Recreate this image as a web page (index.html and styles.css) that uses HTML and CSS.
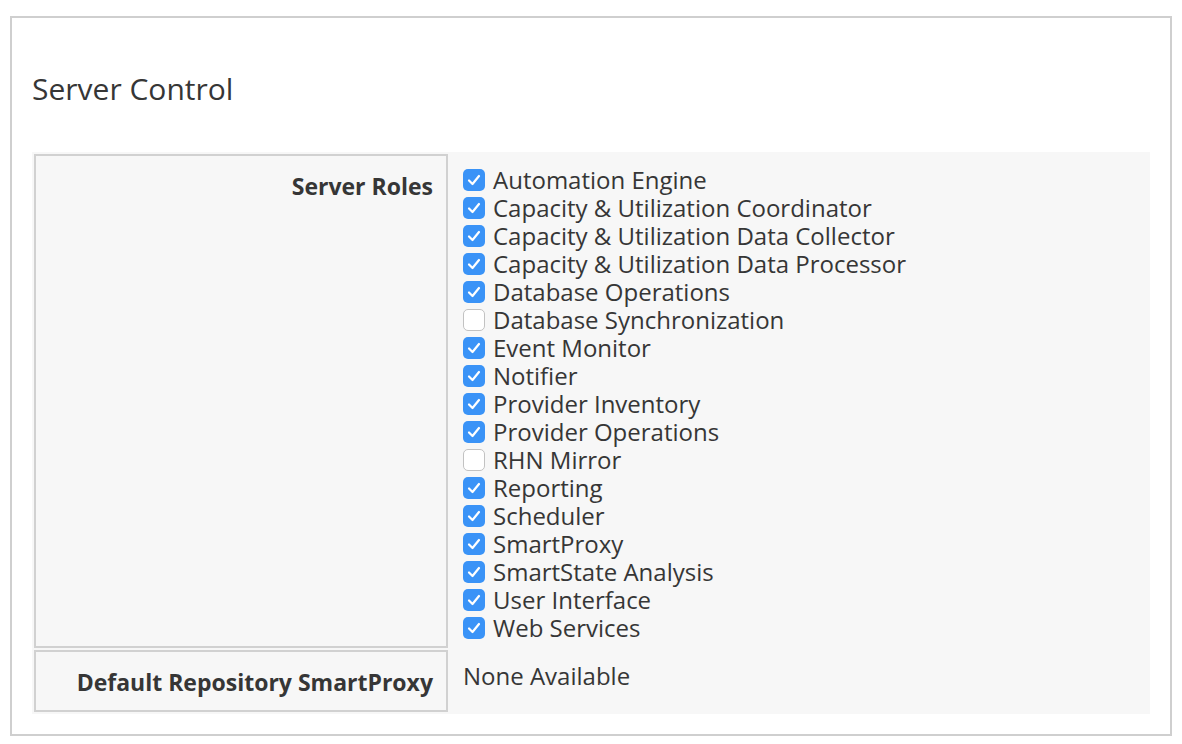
FILE: index.html
```html
<!DOCTYPE html>
<html>
<head>
<meta charset="utf-8">
<link rel="stylesheet" href="styles.css">
</head>
<body>
<div class="panel">
  <h1 class="title">Server Control</h1>
  <table class="form-table">
    <tr>
      <th class="label">Server Roles</th>
      <td class="value">
        <ul class="roles">
          <li><span class="cb on"><svg viewBox="0 0 22 22"><path d="M6 11.5l3.5 3.5 6.5-8" /></svg></span>Automation Engine</li>
          <li><span class="cb on"><svg viewBox="0 0 22 22"><path d="M6 11.5l3.5 3.5 6.5-8" /></svg></span>Capacity &amp; Utilization Coordinator</li>
          <li><span class="cb on"><svg viewBox="0 0 22 22"><path d="M6 11.5l3.5 3.5 6.5-8" /></svg></span>Capacity &amp; Utilization Data Collector</li>
          <li><span class="cb on"><svg viewBox="0 0 22 22"><path d="M6 11.5l3.5 3.5 6.5-8" /></svg></span>Capacity &amp; Utilization Data Processor</li>
          <li><span class="cb on"><svg viewBox="0 0 22 22"><path d="M6 11.5l3.5 3.5 6.5-8" /></svg></span>Database Operations</li>
          <li><span class="cb off"></span>Database Synchronization</li>
          <li><span class="cb on"><svg viewBox="0 0 22 22"><path d="M6 11.5l3.5 3.5 6.5-8" /></svg></span>Event Monitor</li>
          <li><span class="cb on"><svg viewBox="0 0 22 22"><path d="M6 11.5l3.5 3.5 6.5-8" /></svg></span>Notifier</li>
          <li><span class="cb on"><svg viewBox="0 0 22 22"><path d="M6 11.5l3.5 3.5 6.5-8" /></svg></span>Provider Inventory</li>
          <li><span class="cb on"><svg viewBox="0 0 22 22"><path d="M6 11.5l3.5 3.5 6.5-8" /></svg></span>Provider Operations</li>
          <li><span class="cb off"></span>RHN Mirror</li>
          <li><span class="cb on"><svg viewBox="0 0 22 22"><path d="M6 11.5l3.5 3.5 6.5-8" /></svg></span>Reporting</li>
          <li><span class="cb on"><svg viewBox="0 0 22 22"><path d="M6 11.5l3.5 3.5 6.5-8" /></svg></span>Scheduler</li>
          <li><span class="cb on"><svg viewBox="0 0 22 22"><path d="M6 11.5l3.5 3.5 6.5-8" /></svg></span>SmartProxy</li>
          <li><span class="cb on"><svg viewBox="0 0 22 22"><path d="M6 11.5l3.5 3.5 6.5-8" /></svg></span>SmartState Analysis</li>
          <li><span class="cb on"><svg viewBox="0 0 22 22"><path d="M6 11.5l3.5 3.5 6.5-8" /></svg></span>User Interface</li>
          <li><span class="cb on"><svg viewBox="0 0 22 22"><path d="M6 11.5l3.5 3.5 6.5-8" /></svg></span>Web Services</li>
        </ul>
      </td>
    </tr>
    <tr>
      <th class="label">Default Repository SmartProxy</th>
      <td class="value plain">None Available</td>
    </tr>
  </table>
</div>
</body>
</html>
```

FILE: styles.css
```css
html, body {
  margin: 0;
  padding: 0;
  background: #fff;
}
body {
  font-family: "Open Sans", "Liberation Sans", sans-serif;
  color: #363636;
}
.panel {
  margin: 16px 10px 0 10px;
  height: 716px;
  border: 2px solid #cfcfcf;
  padding: 0 20px 0 20px;
  box-sizing: content-box;
}
.title {
  font-size: 30px;
  font-weight: 400;
  margin: 0;
  padding: 51px 0 0 0;
  line-height: 40px;
  height: 83px;
}
.form-table {
  width: 1118px;
  background: #f7f7f7;
  border-spacing: 2px;
}
.label {
  width: 387px;
  border: 2px solid #d1d1d1;
  text-align: right;
  vertical-align: top;
  font-weight: 700;
  font-size: 23px;
  line-height: 28px;
  padding: 16px 13px 0 10px;
  white-space: nowrap;
}
.value {
  vertical-align: top;
  padding: 12px 12px 0 13px;
  font-size: 24px;
  line-height: 28px;
}
.value.plain {
  padding-top: 12px;
  height: 62px;
  box-sizing: border-box;
}
.roles {
  list-style: none;
  margin: 0;
  padding: 0 0 6px 0;
}
.roles li {
  display: flex;
  align-items: center;
  height: 28px;
  white-space: nowrap;
}
.cb {
  width: 22px;
  height: 22px;
  border-radius: 5px;
  box-sizing: border-box;
  margin-right: 8px;
  flex: none;
  display: flex;
}
.cb.on {
  background: #3a93f7;
}
.cb.off {
  background: #fff;
  border: 1.5px solid #c2c2c2;
}
.cb svg {
  width: 22px;
  height: 22px;
  fill: none;
  stroke: #fff;
  stroke-width: 2.2;
  stroke-linecap: round;
  stroke-linejoin: round;
}
```
